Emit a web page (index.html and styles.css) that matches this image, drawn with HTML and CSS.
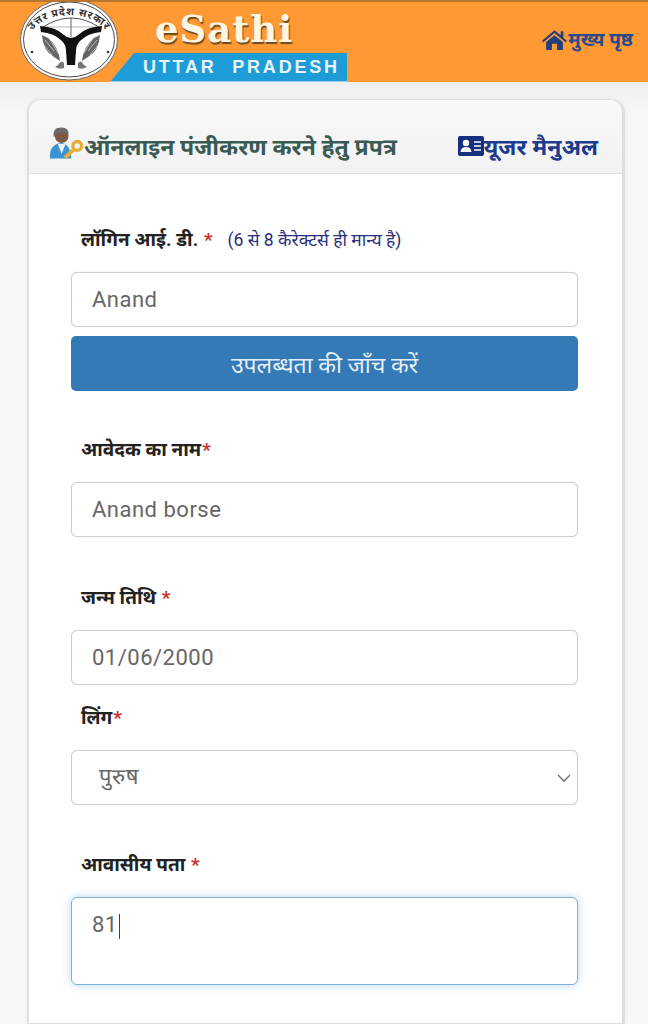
FILE: index.html
```html
<!DOCTYPE html>
<html lang="hi">
<head>
    <meta charset="UTF-8">
    <meta name="viewport" content="width=device-width, initial-scale=1.0">
    <title>eSathi Uttar Pradesh</title>
    <link rel="stylesheet" href="styles.css">
</head>
<body>

    <header class="top-bar">
        <div class="brand">
            <svg class="emblem" viewBox="0 0 100 84" aria-hidden="true">
                <ellipse cx="50" cy="40.500" rx="48.500" ry="40.500" fill="#fff" stroke="#666" stroke-width="1"/>
                <ellipse cx="50" cy="40.500" rx="45.500" ry="37.500" fill="none" stroke="#333" stroke-width="0.900"/>
                <path id="emblem-arc" d="M9 44 A41 28 0 0 1 91 44" fill="none"/>
                <text class="emblem-text"><textPath href="#emblem-arc" startOffset="50%" text-anchor="middle">उत्तर प्रदेश सरकार</textPath></text>
                <!-- bow and arrow -->
                <path d="M24 28 Q52 10 80 28" fill="none" stroke="#555" stroke-width="1"/>
                <path d="M24 28 H80" fill="none" stroke="#888" stroke-width="0.600"/>
                <path d="M52 19 V38" stroke="#555" stroke-width="0.900"/>
                <path d="M21 27 Q37 28 45 36 Q48 39 52 39 Q56 39 59 36 Q67 28 83 27 L82 33 Q69 34 61 42 Q57 46 57 52 L56 66 L48 66 L47 52 Q47 46 43 42 Q35 34 22 33 Z" fill="#111"/>
                <!-- fish, left and right -->
                <path d="M23 36 Q35 40 40 56 L41 62 L35 58 Q24 52 23 36 Z" fill="#666"/>
                <path d="M26 41 L35 52 M24 45 L33 56 M30 39 L39 54" stroke="#ddd" stroke-width="0.700"/>
                <path d="M81 36 Q69 40 64 56 L63 62 L69 58 Q80 52 81 36 Z" fill="#666"/>
                <path d="M78 41 L69 52 M80 45 L71 56 M74 39 L65 54" stroke="#ddd" stroke-width="0.700"/>
                <!-- waves at the foot of the stem -->
                <path d="M39 66 q3 -6 6 -2 v5 q-4 2 -9 -1 Z" fill="#777"/>
                <path d="M65 66 q-3 -6 -6 -2 v5 q4 2 9 -1 Z" fill="#777"/>
                <circle cx="13" cy="53" r="1.300" fill="#333"/>
                <circle cx="89" cy="53" r="1.300" fill="#333"/>
            </svg>
            <div class="brand-text">
                <div class="brand-name">eSathi</div>
                <div class="brand-state">UTTAR&nbsp;&nbsp;PRADESH</div>
            </div>
        </div>
        <a class="home-link" href="#">
            <svg class="home-icon" viewBox="0 0 24 20" aria-hidden="true">
                <path d="M12 1 L18 6 V2 H20.500 V8.200 L24 11.200 L22.600 12.600 L12 3.800 L1.400 12.600 L0 11.200 Z" fill="#1f3f7f"/>
                <path d="M4 12.500 L12 6 L20 12.500 V20 H14.500 V14 H9.500 V20 H4 Z" fill="#1f3f7f"/>
            </svg>
            <span>मुख्य पृष्ठ</span>
        </a>
    </header>

    <main class="card">
        <div class="card-head">
            <h2 class="card-title">
                <svg class="user-icon" viewBox="0 0 36 34" aria-hidden="true">
                    <path d="M1 33 Q0 18 13 17 Q22 18 23 33 Z" fill="#3a93d4"/>
                    <path d="M9 18 L13 28 L17 18 Z" fill="#eef3f6"/>
                    <circle cx="13" cy="10" r="7" fill="#7d5a45"/>
                    <path d="M5 11 Q3 1 13 1 Q21 1 20 9 Q14 4 9 7 Q7 8 5 11 Z" fill="#6b6b6b"/>
                    <circle cx="29" cy="20" r="4.500" fill="none" stroke="#e9ae35" stroke-width="3.500"/>
                    <path d="M25.500 23.500 L16.500 32" stroke="#e9ae35" stroke-width="4"/>
                </svg>
                <span>ऑनलाइन पंजीकरण करने हेतु प्रपत्र</span>
            </h2>
            <a class="manual-link" href="#">
                <svg class="manual-icon" viewBox="0 0 26 20" aria-hidden="true">
                    <rect width="26" height="20" rx="2" fill="#14307f"/>
                    <circle cx="8" cy="7" r="3.200" fill="#fff"/>
                    <path d="M2.500 16 Q3 11 8 11 Q13 11 13.500 16 Z" fill="#fff"/>
                    <path d="M16 6 H23 M16 10 H23 M16 14 H23" stroke="#fff" stroke-width="1.500"/>
                </svg>
                <span>यूजर मैनुअल</span>
            </a>
        </div>

        <form class="reg-form">
            <div class="form-group login-group">
                <label class="field-label">लॉगिन आई. डी. <span class="req">*</span><small class="hint">(6 से 8 कैरेक्टर्स ही मान्य है)</small></label>
                <input class="field" type="text" value="Anand">
                <button class="check-btn" type="button">उपलब्धता की जाँच करें</button>
            </div>
            <div class="form-group name-group">
                <label class="field-label">आवेदक का नाम<span class="req">*</span></label>
                <input class="field" type="text" value="Anand borse">
            </div>
            <div class="form-group dob-group">
                <label class="field-label">जन्म तिथि <span class="req">*</span></label>
                <input class="field" type="text" value="01/06/2000">
            </div>
            <div class="form-group gender-group">
                <label class="field-label">लिंग<span class="req">*</span></label>
                <div class="select-box">
                    <span class="select-value">पुरुष</span>
                    <svg class="chevron" viewBox="0 0 14 8" aria-hidden="true"><path d="M1 1 L7 7 L13 1" fill="none" stroke="#666" stroke-width="1.300"/></svg>
                </div>
            </div>
            <div class="form-group address-group">
                <label class="field-label">आवासीय पता <span class="req">*</span></label>
                <div class="field textarea-box">81<span class="caret"></span></div>
            </div>
        </form>
    </main>

</body>
</html>
```

FILE: styles.css
```css
* {
    box-sizing: border-box;
}

html, body {
    height: 1024px;
    overflow: hidden;
}

body {
    font-family: Roboto, "Noto Sans", "Noto Sans Devanagari", "Liberation Sans", sans-serif;
    background: linear-gradient(#efefef 82px, #f7f7f7 115px);
    margin: 0;
    padding: 0;
}

.top-bar {
    height: 82px;
    display: flex;
    align-items: center;
    justify-content: space-between;
    padding: 0 15px 6px 20px;
    background-color: #ff9933;
    border-top: 2px solid #b8772f;
    overflow: hidden;
}

.brand {
    display: flex;
    align-items: flex-start;
    height: 80px;
    margin-bottom: -6px;
}

.emblem {
    width: 100px;
    height: 84px;
    margin: -3px -1px 0 -1px;
    flex-shrink: 0;
    position: relative;
    z-index: 1;
}

.emblem-text {
    font-size: 10.500px;
    font-weight: bold;
    letter-spacing: 0.800px;
    fill: #333;
}

.brand-text {
    margin-left: -8px;
    width: 237px;
}

.brand-name {
    padding-left: 45px;
    height: 51px;
    font-family: "DejaVu Serif", serif;
    font-size: 37px;
    font-weight: bold;
    line-height: 54px;
    letter-spacing: 1px;
    color: #fdf6e3;
    text-shadow: 1px 2px 1px #6b4a1e;
}

.brand-state {
    height: 29px;
    padding-left: 33px;
    background-color: #1e9cd8;
    clip-path: polygon(24px 0, 100% 0, 100% 100%, 0 100%);
    font-family: "Liberation Sans", sans-serif;
    font-size: 18px;
    font-weight: bold;
    line-height: 28px;
    letter-spacing: 2.800px;
    color: #e8f6fb;
    white-space: nowrap;
    border-bottom: 1px solid #9fd6ee;
}

.home-link {
    display: flex;
    align-items: center;
    color: #2b4a8c;
    font-size: 19px;
    font-weight: bold;
    text-decoration: none;
}

.home-icon {
    width: 25px;
    height: 21px;
    margin-right: 1px;
}

.card {
    width: 598px;
    margin: 17px 0 0 27px;
    height: 925px;
    background: white;
    border: 1px solid #dedede;
    border-right-width: 3px;
    border-left-width: 2px;
    border-radius: 14px 14px 0 0;
    box-shadow: 0 0 6px rgba(0, 0, 0, 0.05);
}

.card-head {
    height: 74px;
    display: flex;
    align-items: center;
    justify-content: space-between;
    padding: 19px 24px 0 20px;
    background: linear-gradient(#f8f8f8, #f2f2f2);
    border-bottom: 1px solid #e2e2e2;
    border-radius: 12px 12px 0 0;
}

.card-title {
    display: flex;
    align-items: center;
    margin: 0;
    font-size: 23px;
    font-weight: bold;
    color: #3a5a52;
}

.user-icon {
    width: 35px;
    height: 34px;
    margin-top: -6px;
}

.manual-link {
    display: flex;
    align-items: center;
    color: #1d3a8f;
    font-size: 23px;
    font-weight: bold;
    text-decoration: none;
}

.manual-icon {
    width: 26px;
    height: 20px;
}

.reg-form {
    padding: 0 43px 0 42px;
}

.form-group {
    display: flex;
    flex-direction: column;
}

.login-group {
    padding-top: 51px;
}

.name-group {
    padding-top: 44px;
}

.dob-group {
    padding-top: 46px;
}

.gender-group {
    padding-top: 18px;
}

.address-group {
    padding-top: 45px;
}

.field-label {
    display: block;
    height: 30px;
    margin-bottom: 17px;
    padding-left: 10px;
    font-size: 19px;
    font-weight: bold;
    line-height: 30px;
    color: #222;
    white-space: nowrap;
}

.req {
    margin-left: 1px;
    color: #c9302c;
}

.hint {
    margin-left: 15px;
    font-size: 17.500px;
    font-weight: normal;
    color: #2a2f7c;
}

.field, .select-box {
    width: 507px;
    height: 55px;
    padding: 0 20px;
    background: white;
    border: 1px solid #cfcfcf;
    border-radius: 6px;
    box-shadow: 0 0 1px rgba(0, 0, 0, 0.2);
    font-family: inherit;
    font-size: 22px;
    color: #666;
    letter-spacing: 0.500px;
}

.check-btn {
    width: 507px;
    height: 55px;
    margin-top: 9px;
    background-color: #337ab7;
    border: none;
    border-radius: 5px;
    font-family: inherit;
    font-size: 23px;
    color: #e6eef6;
}

.select-box {
    display: flex;
    align-items: center;
    justify-content: space-between;
    padding: 0 6px 0 27px;
}

.select-value {
    margin-bottom: 5px;
}

.chevron {
    width: 14px;
    height: 8px;
}

.textarea-box {
    height: 88px;
    padding-top: 12px;
    line-height: 30px;
    border-color: #7fb0d0;
    box-shadow: 0 0 8px rgba(102, 175, 233, 0.5);
}

.caret {
    display: inline-block;
    width: 1px;
    height: 25px;
    margin-left: 1px;
    background-color: #444;
    vertical-align: middle;
}
```
